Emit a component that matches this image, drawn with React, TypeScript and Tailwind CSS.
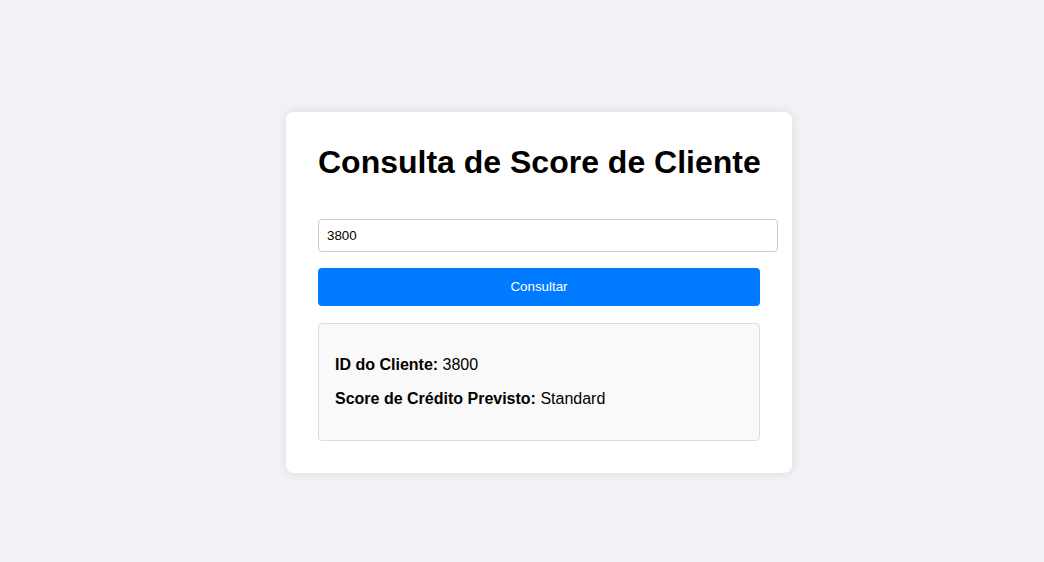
export default function App() {
  return (
    <div
      className="min-h-screen bg-[#f0f2f5] pl-[286px] pt-[112px]"
      style={{ fontFamily: '"Liberation Sans", Arial, sans-serif' }}
    >
      <div className="w-[506px] rounded-lg bg-white p-8 shadow-[0_0_10px_rgba(0,0,0,0.1)]">
        <h1 className="m-0 whitespace-nowrap text-[32px] font-bold leading-[37px] text-black">
          Consulta de Score de Cliente
        </h1>

        <form className="mt-[38px]" onSubmit={(e) => e.preventDefault()}>
          <input
            type="text"
            defaultValue="3800"
            className="box-content block h-[15px] w-full rounded border border-[#ccc] bg-white px-2 py-2 text-[13.33px] leading-[15px] text-black outline-none"
          />
          <button
            type="submit"
            className="mt-4 block h-[38px] w-full rounded bg-[#007bff] text-[13.33px] font-normal text-white"
          >
            Consultar
          </button>
        </form>

        <div className="mt-[17px] rounded border border-[#ddd] bg-[#f9f9f9] px-4 py-4">
          <p className="my-4 text-base leading-[18px] text-black">
            <strong>ID do Cliente:</strong> 3800
          </p>
          <p className="my-4 text-base leading-[18px] text-black">
            <strong>Score de Crédito Previsto:</strong> Standard
          </p>
        </div>
      </div>
    </div>
  );
}
